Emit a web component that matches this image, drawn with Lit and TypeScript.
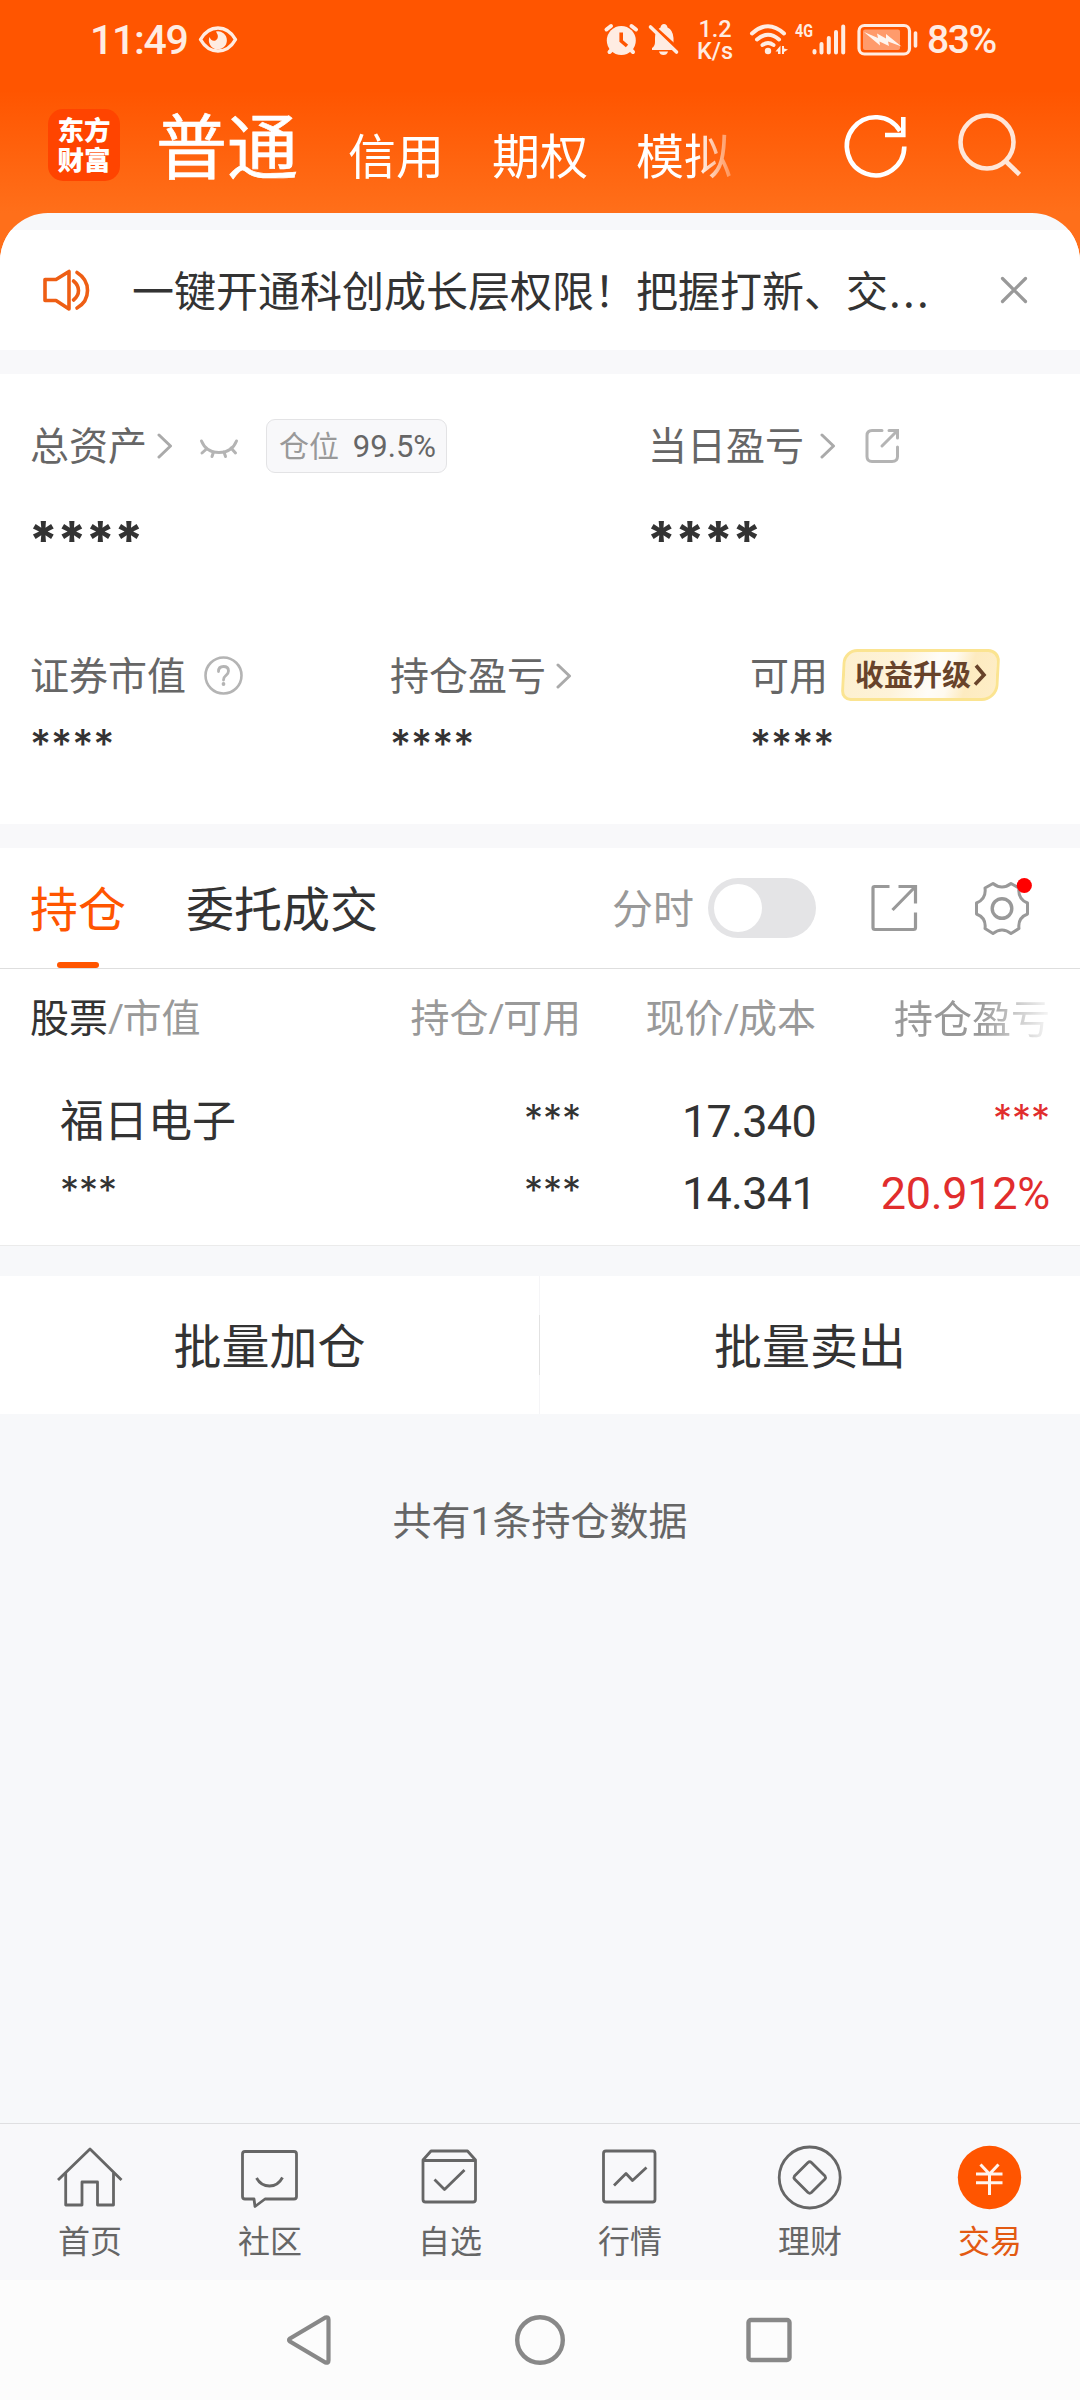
import { LitElement, html, svg, css, nothing, type SVGTemplateResult } from "lit";
import { customElement, property } from "lit/decorators.js";
import { classMap } from "lit/directives/class-map.js";

const base = css`
  * { box-sizing: border-box; }
  svg { display: block; flex: none; fill: none; }
  .cjk { line-height: 1; padding-bottom: 0.11em; white-space: nowrap; }
  .num { font-family: Roboto, "Noto Sans CJK SC", sans-serif; line-height: 1; white-space: nowrap; }
`;

/* Every glyph is drawn in page coordinates; the viewBox cuts out its own area. */
const icon = (x: number, y: number, w: number, h: number, body: SVGTemplateResult) =>
  html`<svg width=${w} height=${h} viewBox="${x} ${y} ${w} ${h}">${body}</svg>`;

const chevron = html`<svg width="16" height="26" viewBox="0 0 16 26">
  <path d="M2 2L13.500 13L2 24" stroke="#aaa" stroke-width="3" stroke-linecap="round" stroke-linejoin="round"/></svg>`;

@customElement("status-bar")
class StatusBar extends LitElement {
  static styles = [base, css`
    :host { display: flex; align-items: center; height: 80px; padding: 0 0 0 90px; color: #ffece2; }
    .time { width: 98px; font-size: 41px; font-weight: 500; letter-spacing: -1.300px; }
    .eye { margin-left: 10px; width: 405px; }
    .icons { display: flex; align-items: center; }
    .speed { display: flex; flex-direction: column; align-items: center; width: 36px; margin: 0 15px 0 15px; font-size: 23.500px; font-weight: 500; line-height: 22px; }
    .bell { margin-left: 7px; }
    .signal { margin-left: 3px; }
    .battery { margin-left: 8px; }
    .percent { margin-left: 6px; font-size: 39px; font-weight: 500; letter-spacing: -1.400px; }
  `];
  render() {
    return html`
      <span class="num time">11:49</span>
      <div class="eye">${icon(198, 20, 40, 40, svg`
        <path d="M200.5 39.5Q207 28 218 28Q229 28 235.500 39.500Q229 51 218 51Q207 51 200.500 39.500Z" stroke="#ffece2" stroke-width="3.400" stroke-linejoin="round"/>
        <path d="M216 31.500A9 9 0 1 1 209.500 37Q211 41.500 215.500 40.500Q220 38 216 31.500Z" fill="#ffece2"/>`)}</div>
      <div class="icons">
        ${icon(603, 20, 37, 40, svg`
          <g stroke="#ffece2" stroke-width="4" stroke-linecap="round"><path d="M606.500 29.500L611 26M636 29.500L631.500 26M609.500 52L612 49.500M633 52L630.500 49.500"/></g>
          <circle cx="621.300" cy="40.500" r="14.500" fill="#ffece2"/>
          <path d="M621.200 32.500V41L627 46" stroke="#ff5500" stroke-width="3.600"/>`)}
        <div class="bell">${icon(647, 20, 35, 40, svg`
          <path d="M652 50V48Q655 46 655 42V38Q655 31.500 659 28.500L660.500 27.500Q661 24 664 24Q667 24 667.500 27.500Q673 30 673.500 38V43L676 50Z" fill="#ffece2"/>
          <path d="M659 51.500H668Q667 55 663.500 55Q660 55 659 51.500Z" fill="#ffece2"/>
          <path d="M652 25.500L679.500 50.500" stroke="#ff5500" stroke-width="4"/>
          <path d="M650.500 27L676.500 52" stroke="#ffece2" stroke-width="3.600" stroke-linecap="round"/>`)}</div>
        <div class="num speed"><span>1.2</span><span>K/s</span></div>
        ${icon(748, 20, 43, 40, svg`
          <g stroke="#ffece2" stroke-width="4" stroke-linecap="round">
            <path d="M752 33.500Q768 19 784 33.500M757 39.500Q768 30 779 39.500M762.500 45Q768 41 773.500 45"/></g>
          <circle cx="768" cy="51" r="3.200" fill="#ffece2"/>
          <path d="M780.500 45.500V54H778V51.500H775.500ZM782 46V54H784V52L788 49.500L784 48.500V46Z" fill="#ffece2"/>`)}
        <div class="signal">${icon(794, 20, 54, 40, svg`
          <text x="795" y="37" font-family="Roboto, sans-serif" font-size="18" font-weight="700" fill="#ffece2" textLength="18" lengthAdjust="spacingAndGlyphs">4G</text>
          <path d="M814.500 51V52.500M821.500 44V52.500M828.800 38V52.500M836 32V52.500M843.200 26.500V52.500" stroke="#ffece2" stroke-width="4" stroke-linecap="round"/>`)}</div>
        <div class="battery">${icon(856, 20, 65, 40, svg`
          <rect x="859" y="25.500" width="50.500" height="28.500" rx="5.500" stroke="#ffece2" stroke-width="3.200"/>
          <rect x="863" y="29.500" width="37" height="20.500" rx="2" fill="#ff9b6c"/>
          <path d="M864 32L878 38L877 33.500L886 38.500L886 34L901.500 46.500L888 41.500L889 46L879.500 41.500L880 45.500Z" fill="#fff5ef"/>
          <path d="M915.500 33V46" stroke="#ffece2" stroke-width="3.600" stroke-linecap="round"/>`)}</div>
        <span class="num percent">83%</span>
      </div>`;
  }
}

@customElement("account-header")
class AccountHeader extends LitElement {
  static styles = [base, css`
    :host { display: flex; height: 133px; padding: 29px 0 0 48px; color: #fff; }
    .logo { display: grid; align-content: center; justify-items: center; gap: 3px; width: 72px; height: 72px; padding-bottom: 4px; border-radius: 15px;
      background: #ff4400; font-size: 26.500px; font-weight: 900; line-height: 27px; font-family: "Noto Sans CJK SC", sans-serif; }
    .tabs { display: flex; align-items: flex-end; gap: 48px; width: 640px; height: 80px; margin-left: 36px; font-size: 48px;
      -webkit-mask-image: linear-gradient(90deg, #000 540px, transparent 590px); mask-image: linear-gradient(90deg, #000 540px, transparent 590px); }
    .tabs span { line-height: 48px; margin-bottom: 12px; white-space: nowrap; }
    .tabs .on { font-size: 71px; line-height: 72px; width: 144px; margin-bottom: 11px; -webkit-text-stroke: 0.700px #fff; }
    .search { margin-left: 41px; }
    .refresh { margin-left: 45px; }
  `];
  render() {
    return html`
      <div class="logo"><span>东方</span><span>财富</span></div>
      <div class="tabs"><span class="on">普通</span><span>信用</span><span>期权</span><span>模拟</span></div>
      <div class="refresh">${icon(841, 109, 68, 73, svg`
        <g stroke="#fff" stroke-width="4.600"><path d="M904.300 146.500A28.700 29 0 1 1 900 131"/><path d="M903.300 117V135H885"/></g>`)}</div>
      <div class="search">${icon(950, 109, 76, 73, svg`
        <g stroke="#ffe6d8" stroke-width="4.600"><circle cx="987" cy="142" r="26.500"/><path d="M1005.500 161L1019.500 174.500"/></g>`)}</div>`;
  }
}

@customElement("notice-bar")
class NoticeBar extends LitElement {
  static styles = [base, css`
    :host { display: flex; align-items: center; height: 120px; background: #fff; padding-left: 42px; }
    .text { width: 866px; margin-left: 42px; padding-top: 2px; font-size: 42px; color: #333; }
    .dots { letter-spacing: 2.300px; margin-left: 1px; }
  `];
  render() {
    return html`
      ${icon(42, 268, 48, 44, svg`<g stroke="#ee5e14" stroke-width="3.600" stroke-linecap="round" stroke-linejoin="round">
        <path d="M45 279.500H56L69 271.500V309L56 300.500H45Z"/><path d="M73.500 281Q78.500 285 78.500 290.500Q78.500 296 73.500 300"/><path d="M77 272.500Q87.500 279 87.500 290.500Q87.500 302 77 308"/></g>`)}
      <div class="cjk text">一键开通科创成长层权限！把握打新、交<span class="dots">...</span></div>
      ${icon(998, 274, 32, 32, svg`<path d="M1002.500 278.500L1025.500 301.500M1025.500 278.500L1002.500 301.500" stroke="#999" stroke-width="3.200" stroke-linecap="round"/>`)}`;
  }
}

@customElement("asset-summary")
class AssetSummary extends LitElement {
  static styles = [base, css`
    :host { display: block; height: 450px; background: #fff; padding: 42px 0 0 30px; font-size: 39px; color: #666; }
    .top { display: grid; grid-template-columns: 618px 1fr; }
    .bottom { display: grid; grid-template-columns: 360px 360px 1fr; margin-top: 81px; }
    .label { display: flex; align-items: center; height: 60px; }
    .chev { margin-left: 10px; }
    .chev.wide { margin-left: 16px; }
    .eye { margin-left: 26px; }
    .ratio { display: flex; align-items: center; justify-content: space-between; width: 181px; height: 54px; margin-left: 26px; padding: 0 10px 0 12px;
      border: 1.500px solid #e3e3e5; border-radius: 9px; background: #f8f8fa; font-size: 30px; color: #999; }
    .ratio .num { font-size: 31px; padding-top: 1px; color: #666; }
    .share { margin-left: 28px; }
    .help { margin-left: 17px; }
    .stars { font-family: Inter, sans-serif; color: #333; line-height: 1; }
    .big { font-size: 51px; font-weight: 800; letter-spacing: -1.200px; margin: 38px 0 0 -1.500px; height: 51px; }
    .small { font-size: 40.500px; font-weight: 500; margin-top: 19px; height: 40px; }
    .promo { display: flex; align-items: center; width: 157px; height: 52px; margin-left: 14px; margin-top: -2px; padding-left: 14px; color: #68432a; font-size: 29px; font-weight: 700;
      border: 3px solid #fbe491; border-radius: 14px 12px 16px 10px; transform: skewX(-3deg);
      background: linear-gradient(105deg, #fdf0cf 0%, #fef3d9 35%, #fffdf8 58%, #fffaf0 68%, #fdebc0 80%, #feeec8 100%); }
    .promo .cjk { transform: skewX(3deg); margin-left: -4px; }
    .promo svg { margin-left: 2px; }
  `];
  render() {
    return html`
      <div class="top">
        <div>
          <div class="label"><span class="cjk">总资产</span><span class="chev">${chevron}</span>
            <span class="eye">${icon(199, 430, 41, 30, svg`<g stroke="#b4b4b4" stroke-width="3" stroke-linecap="round">
              <path d="M201.500 440Q206 451.500 219 451.500Q232 451.500 236.500 440"/><path d="M206.500 448L202 452M213.500 451L212 455.500M224 451L225.500 455.500M231 447L235.500 452"/></g>`)}</span>
            <span class="ratio"><span class="cjk">仓位</span><span class="num">99.5%</span></span></div>
          <div class="stars big">****</div>
        </div>
        <div>
          <div class="label"><span class="cjk">当日盈亏</span><span class="chev wide">${chevron}</span>
            <span class="share">${icon(864, 427, 37, 38, svg`<g stroke="#b4b4b4" stroke-width="3" stroke-linecap="round">
              <path d="M882 430.500H872Q867 430.500 867 435.500V456.500Q867 461.500 872 461.500H892Q897.500 461.500 897.500 456.500V447"/><path d="M882 446L897 431M889 430.500H897.500V438"/></g>`)}</span></div>
          <div class="stars big">****</div>
        </div>
      </div>
      <div class="bottom">
        <div><div class="label"><span class="cjk">证券市值</span><span class="help">${icon(203, 655, 42, 42, svg`
            <circle cx="223.500" cy="675.500" r="18" stroke="#b4b4b4" stroke-width="2.600"/>
            <path d="M218.500 671.500Q218.500 666.500 223.500 666.500Q228.500 666.500 228.500 671Q228.500 673.500 225.800 675.500Q223.500 677.300 223.500 680" stroke="#b4b4b4" stroke-width="2.800" stroke-linecap="round"/>
            <circle cx="223.500" cy="684" r="1.900" fill="#b4b4b4"/>`)}</span></div>
          <div class="stars small">****</div></div>
        <div><div class="label"><span class="cjk">持仓盈亏</span><span class="chev">${chevron}</span></div>
          <div class="stars small">****</div></div>
        <div><div class="label"><span class="cjk">可用</span>
            <span class="promo"><span class="cjk">收益升级</span>
              <svg width="14" height="24" viewBox="0 0 14 24"><path d="M2.500 2.500L11 12L2.500 21.500" stroke="#68432a" stroke-width="3.600"/></svg></span></div>
          <div class="stars small">****</div></div>
      </div>`;
  }
}

@customElement("position-tabs")
class PositionTabs extends LitElement {
  static styles = [base, css`
    :host { display: flex; align-items: center; height: 121px; background: #fff; border-bottom: 1px solid #dedede; padding-left: 30px; font-size: 48px; color: #333; }
    .tab { position: relative; width: 156px; }
    .cjk { padding-top: 2px; }
    .on { color: #ff5500; }
    .on::after { content: ""; position: absolute; left: 27px; bottom: -32px; width: 42px; height: 6px; border-radius: 3px; background: #ff5500; }
    .orders { width: 426px; }
    .minute { font-size: 41px; color: #999; width: 96px; }
    .switch { width: 108px; height: 60px; padding: 6px; border-radius: 30px; background: #e4e4e6; }
    .knob { width: 48px; height: 48px; border-radius: 50%; background: #fff; }
    .share { margin-left: 53px; }
    .gear { margin-left: 53px; }
  `];
  render() {
    return html`
      <span class="cjk tab on">持仓</span><span class="cjk orders">委托成交</span>
      <span class="cjk minute">分时</span><div class="switch"><div class="knob"></div></div>
      <div class="share">${icon(869, 878, 50, 60, svg`<g stroke="#999" stroke-width="3.200">
        <path d="M889.500 886.500H874.500Q873 886.500 873 888V927.500Q873 929.500 875 929.500H913.500Q915.500 929.500 915.500 927.500V912.500"/><path d="M892.500 910L914 888M898.500 886.500H915.500V903.500" /></g>`)}</div>
      <div class="gear">${icon(972, 876, 62, 64, svg`
        <g stroke="#999" stroke-width="3" stroke-linejoin="round"><circle cx="1002" cy="908.500" r="9.800" stroke-width="3.400"/>
        <path d="M993 883.500Q1002 890.500 1011 883.500L1019 888Q1017.500 899 1027.500 903V914Q1017.500 918 1019 928.500L1011 933.500Q1002 926.500 993 933.500L985 928.500Q986.500 918 976.500 914V903Q986.500 899 985 888Z"/></g>
        <circle cx="1024.300" cy="885.500" r="7.600" fill="#ff0000"/>`)}</div>`;
  }
}

@customElement("position-table")
class PositionTable extends LitElement {
  static styles = [base, css`
    :host { display: block; height: 277px; background: #fff; border-bottom: 1px solid #ebebeb; color: #333; }
    .head, .row { display: grid; grid-template-columns: 319px 232px 235px 1fr; padding: 0 30px; align-items: center; }
    .head { height: 98px; padding-top: 4px; font-size: 39px; color: #999; }
    .head > :not(:first-child), .row > :not(:first-child) { justify-self: end; }
    .slash { font-family: Roboto, sans-serif; line-height: 1; letter-spacing: -1.500px; }
    .key { color: #333; }
    .head .fade { padding-bottom: 0.18em; -webkit-mask-image: linear-gradient(90deg, #000 55%, rgba(0,0,0,.08) 100%); mask-image: linear-gradient(90deg, #000 55%, rgba(0,0,0,.08) 100%); }
    .row { height: 72px; font-size: 44px; }
    .rows { padding-top: 18px; }
    .name { padding: 0 0 0.12em 30px; }
    .stars { font-family: Inter, sans-serif; font-size: 38px; line-height: 1; padding-bottom: 6px; }
    .num { font-size: 45px; letter-spacing: -0.700px; }
    .num.up { letter-spacing: -0.300px; }
    .up { color: #e12d2d; }
    .pad { padding-left: 30px; }
  `];
  render() {
    return html`
      <div class="head"><span class="cjk"><span class="key">股票</span><span class="slash">/</span>市值</span><span class="cjk">持仓<span class="slash">/</span>可用</span><span class="cjk">现价<span class="slash">/</span>成本</span><span class="cjk fade">持仓盈亏</span></div>
      <div class="rows">
        <div class="row"><span class="cjk name">福日电子</span><span class="stars">***</span><span class="num">17.340</span><span class="stars up">***</span></div>
        <div class="row"><span class="stars pad">***</span><span class="stars">***</span><span class="num">14.341</span><span class="num up">20.912%</span></div>
      </div>`;
  }
}

@customElement("batch-actions")
class BatchActions extends LitElement {
  static styles = [base, css`
    :host { display: grid; grid-template-columns: 539px 1px 1fr; height: 138px; margin-top: 30px; background: #fff; align-items: center; justify-items: center; font-size: 48px; color: #333; }
    .cjk { padding-top: 2px; }
    .line { width: 1px; height: 100%; background: linear-gradient(#f5f5f7 0 39px, #e2e2e2 39px 99px, #f5f5f7 99px); }
  `];
  render() {
    return html`<span class="cjk">批量加仓</span><span class="line"></span><span class="cjk">批量卖出</span>`;
  }
}

@customElement("nav-item")
class NavItem extends LitElement {
  @property() label = "";
  @property({ type: Boolean }) active = false;
  @property({ attribute: false }) glyph: unknown = nothing;
  static styles = [base, css`
    :host { display: block; }
    .item { display: flex; flex-direction: column; align-items: center; gap: 11px; padding-top: 18px; color: #666; }
    .active { color: #e35a12; }
    .cjk { font-size: 32px; }
  `];
  render() {
    return html`<div class=${classMap({ item: true, active: this.active })}>${this.glyph}<span class="cjk">${this.label}</span></div>`;
  }
}

const g = (x: number, body: SVGTemplateResult) => icon(x, 2142, 70, 70, svg`<g stroke="#666" stroke-width="2.800" stroke-linejoin="round">${body}</g>`);

const NAV = [
  { label: "首页", glyph: g(55, svg`<path d="M58 2180L90 2149L121.500 2180"/><path d="M65.700 2173V2205H82V2182H97.500V2205H113.500V2173"/>`) },
  { label: "社区", glyph: g(235, svg`<path d="M245 2151.500H294Q296.500 2151.500 296.500 2154V2196.500Q296.500 2199 294 2199H265L255 2206.500L254 2199H245Q242.500 2199 242.500 2196.500V2154Q242.500 2151.500 245 2151.500Z"/><path d="M256.500 2178Q261 2186 269.500 2186Q278 2186 282.500 2177.500"/>`) },
  { label: "自选", glyph: g(415, svg`<path d="M423 2160L431 2151H467.500L475.500 2160V2199.500Q475.500 2202 473 2202H425.500Q423 2202 423 2199.500ZM423 2160.500H475.500"/><path d="M434.500 2179.500L444.500 2189.500L464.500 2170"/>`) },
  { label: "行情", glyph: g(595, svg`<rect x="603.500" y="2151" width="51.500" height="51" rx="2.500"/><path d="M614 2185.500L626 2173.500L632.500 2180.500L646.500 2167.500"/>`) },
  { label: "理财", glyph: g(775, svg`<circle cx="809.700" cy="2177.500" r="30.500"/><path d="M808 2162.500Q809.700 2161 811.400 2162.500L825 2176Q826 2177.500 825 2179L811.400 2192.500Q809.700 2194 808 2192.500L794.500 2179Q793.500 2177.500 794.500 2176Z"/>`) },
  { label: "交易", active: true, glyph: icon(955, 2142, 70, 70, svg`<circle cx="989.500" cy="2177.500" r="31.700" fill="#ff5500"/><path d="M980.500 2164.500L989.500 2174L998.500 2164.500M976 2174H1002.500M976 2182.800H1002.500M989.500 2174V2195" stroke="#fff4ee" stroke-width="3"/>`) },
];

@customElement("bottom-nav")
class BottomNav extends LitElement {
  static styles = [base, css`
    :host { display: grid; grid-template-columns: repeat(6, 180px); height: 157px; background: #f8f8fa; border-top: 1px solid #dfdfe1; }
  `];
  render() {
    return NAV.map((n) => html`<nav-item .label=${n.label} .active=${!!n.active} .glyph=${n.glyph}></nav-item>`);
  }
}

@customElement("system-nav")
class SystemNav extends LitElement {
  static styles = [base, css`
    :host { display: flex; align-items: center; justify-content: center; gap: 180px; height: 120px; background: #fcfcfc; }
  `];
  render() {
    return html`
      ${icon(284.5, 2315, 50, 50, svg`<path d="M289.500 2338.500L325 2317.500Q328 2316.500 328 2319.500V2360.500Q328 2363.500 325 2362.500L289.500 2341.500Q287.500 2340 289.500 2338.500Z" stroke="#888" stroke-width="4.200"/>`)}
      ${icon(515, 2315, 50, 50, svg`<circle cx="540" cy="2340" r="22.800" stroke="#888" stroke-width="4.400"/>`)}
      ${icon(745, 2315, 50, 50, svg`<rect x="748.500" y="2320" width="41" height="40" rx="2.500" stroke="#888" stroke-width="4.400"/>`)}`;
  }
}

@customElement("app-root")
class AppRoot extends LitElement {
  static styles = [base, css`
    :host { display: block; width: 1080px; height: 2400px; overflow: hidden; font-family: "Noto Sans CJK SC", sans-serif; }
    .page { display: flex; flex-direction: column; height: 2400px; background: linear-gradient(#ff5500 90px, #ff6f1a 213px, #ff6f1a 300px) no-repeat 0 0 / 100% 300px; }
    .panel { flex: 1; display: flex; flex-direction: column; padding-top: 17px; border-radius: 48px 48px 0 0; overflow: hidden; background: #f7f8fa; }
    .gap { flex: none; height: 24px; background: #f8f8fa; }
    .count { flex: 1; padding-top: 85px; text-align: center; font-size: 39px; color: #666; }
    .count .cjk { display: block; }
  `];
  render() {
    return html`<div class="page">
      <status-bar></status-bar>
      <account-header></account-header>
      <div class="panel">
        <notice-bar></notice-bar><div class="gap"></div>
        <asset-summary></asset-summary><div class="gap"></div>
        <position-tabs></position-tabs>
        <position-table></position-table>
        <batch-actions></batch-actions>
        <div class="count"><span class="cjk">共有<span class="num">1</span>条持仓数据</span></div>
      </div>
      <bottom-nav></bottom-nav>
      <system-nav></system-nav>
    </div>`;
  }
}
